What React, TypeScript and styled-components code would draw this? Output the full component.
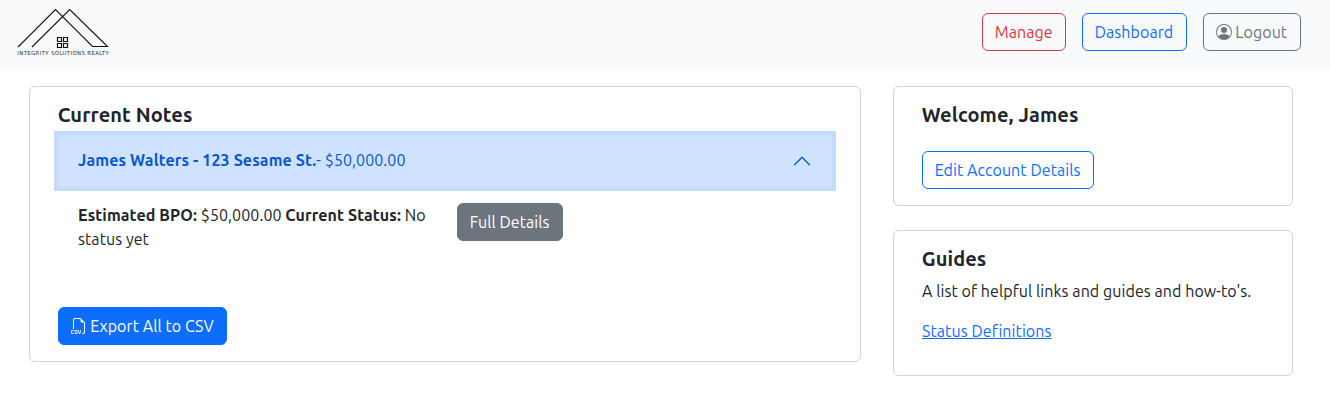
import React from "react";
import styled, { createGlobalStyle } from "styled-components";
import { BsChevronUp, BsFiletypeCsv, BsPersonCircle } from "react-icons/bs";

const GlobalStyle = createGlobalStyle`
  *, *::before, *::after { box-sizing: border-box; }
  body {
    margin: 0;
    background: #fff;
    color: #212529;
    font-family: "Ubuntu", "Noto Sans", "Open Sans", sans-serif;
    font-size: 16px;
    line-height: 24px;
    letter-spacing: 0.07px;
  }
  b { letter-spacing: 0.12px; }
`;

const Navbar = styled.header`
  display: flex;
  align-items: center;
  justify-content: space-between;
  height: 70px;
  padding: 0 29px 6px 16px;
  background: #f8f9fa;
`;

const Logo = styled.svg`
  display: block;
  width: 94px;
  height: 52px;
  letter-spacing: 0;
`;

const NavActions = styled.nav`
  display: flex;
  gap: 16px;
`;

const tones = {
  danger: "#dc3545",
  primary: "#0d6efd",
  secondary: "#6c757d",
};

const Button = styled.button<{ $tone: keyof typeof tones; $solid?: boolean; $width: number }>`
  display: inline-flex;
  align-items: center;
  gap: 3.6px;
  flex: none;
  width: ${(p) => p.$width}px;
  height: 38px;
  padding: 0 0 0 11.7px;
  border: 1px solid ${(p) => tones[p.$tone]};
  border-radius: 6px;
  background: ${(p) => (p.$solid ? tones[p.$tone] : "transparent")};
  color: ${(p) => (p.$solid ? "#fff" : tones[p.$tone])};
  font: inherit;
  letter-spacing: inherit;
  white-space: nowrap;
  cursor: pointer;

  svg {
    flex: none;
    width: 16px;
    height: 16px;
  }
`;

const Main = styled.main`
  display: grid;
  grid-template-columns: 832px 400px;
  align-items: start;
  gap: 32px;
  padding: 16px 29px;
`;

const Sidebar = styled.aside`
  display: grid;
  gap: 24px;
`;

const Card = styled.section<{ $height: number }>`
  height: ${(p) => p.$height}px;
  padding: 16px 28px;
  border: 1px solid #d2d2d3;
  border-radius: 6px;
`;

const CardTitle = styled.h5`
  margin: 0 0 8px;
  font-size: 20px;
  font-weight: 700;
  line-height: 24px;
  letter-spacing: 0.11px;
  text-indent: -0.3px;
`;

const AccordionHeader = styled.button`
  display: flex;
  align-items: center;
  justify-content: space-between;
  width: 774px;
  height: 52px;
  padding: 0 20px;
  border: 0;
  background: #cfe2ff;
  box-shadow: 0 0 0 4px #c2dbff;
  color: #0a58ca;
  font: inherit;
  letter-spacing: inherit;
  text-align: left;

  svg {
    width: 20px;
    height: 20px;
  }
`;

const AccordionLabel = styled.span`
  padding-bottom: 2px;
`;

const AccordionBody = styled.div`
  display: flex;
  align-items: flex-start;
  gap: 24px;
  height: 120px;
  padding: 16px 20px;
`;

const Summary = styled.div`
  width: 355px;
`;

const SummaryLine = styled.div`
  white-space: nowrap;
`;

const Text = styled.p`
  margin: 0 0 16px;
  white-space: nowrap;
`;

const Link = styled.a`
  color: #0d6efd;
  text-decoration: underline;
`;

const AccountActions = styled.div`
  padding-top: 16px;
`;

function BrandLogo() {
  return (
    <Logo viewBox="16 6 94 52" role="img" aria-label="Integrity Solutions Realty">
      <g fill="none" stroke="#111">
        <path strokeWidth="1.1" d="M18 47 55.5 9.5 92.5 46.5H107.5L69.7 9.5 32 47" />
        <path strokeWidth="1.2" d="M57.5 37.5h4v4h-4zM63.5 37.5h4v4h-4zM57.5 43.5h4v4h-4zM63.5 43.5h4v4h-4z" />
      </g>
      <text
        x="17.3"
        y="55"
        fill="#333"
        fontFamily="'DejaVu Sans', sans-serif"
        fontSize="5.4"
        textLength="91.5"
        lengthAdjust="spacing"
      >
        INTEGRITY SOLUTIONS REALTY
      </text>
    </Logo>
  );
}

export default function App() {
  return (
    <>
      <GlobalStyle />
      <Navbar>
        <BrandLogo />
        <NavActions>
          <Button $tone="danger" $width={84}>Manage</Button>
          <Button $tone="primary" $width={105}>Dashboard</Button>
          <Button $tone="secondary" $width={98}>
            <BsPersonCircle />
            Logout
          </Button>
        </NavActions>
      </Navbar>
      <Main>
        <Card $height={276}>
          <CardTitle>Current Notes</CardTitle>
          <AccordionHeader>
            <AccordionLabel>
              <b>James Walters - 123 Sesame St.</b>- $50,000.00
            </AccordionLabel>
            <BsChevronUp />
          </AccordionHeader>
          <AccordionBody>
            <Summary>
              <SummaryLine>
                <b>Estimated BPO:</b> $50,000.00 <b>Current Status:</b> No
              </SummaryLine>
              <SummaryLine>status yet</SummaryLine>
            </Summary>
            <Button $tone="secondary" $solid $width={106}>Full Details</Button>
          </AccordionBody>
          <Button $tone="primary" $solid $width={169}>
            <BsFiletypeCsv />
            Export All to CSV
          </Button>
        </Card>
        <Sidebar>
          <Card $height={120}>
            <CardTitle>Welcome, James</CardTitle>
            <AccountActions>
              <Button $tone="primary" $width={172}>Edit Account Details</Button>
            </AccountActions>
          </Card>
          <Card $height={146}>
            <CardTitle>Guides</CardTitle>
            <Text>A list of helpful links and guides and how-to's.</Text>
            <Link href="#">Status Definitions</Link>
          </Card>
        </Sidebar>
      </Main>
    </>
  );
}
